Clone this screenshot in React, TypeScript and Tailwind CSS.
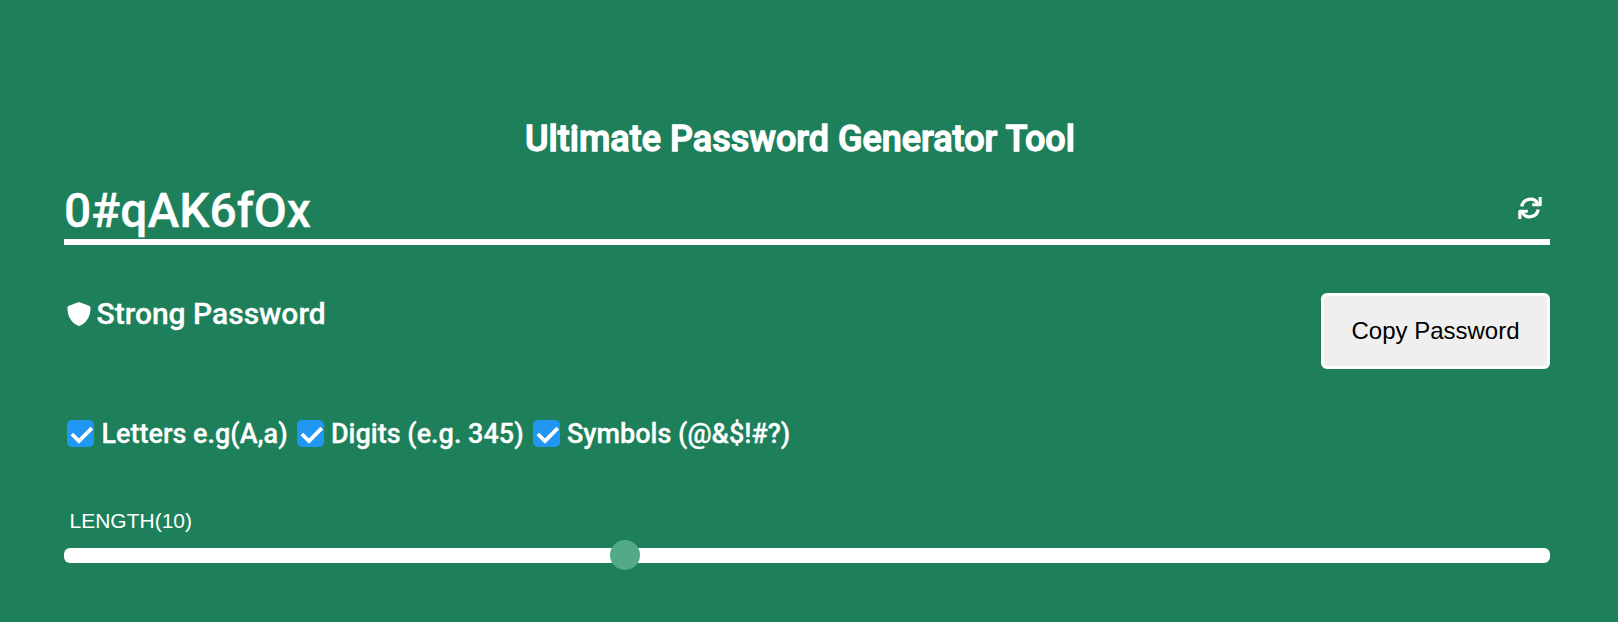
import React from "react";

const options = ["Letters e.g(A,a)", "Digits (e.g. 345)", "Symbols (@&$!#?)"];

export default function App() {
  return (
    <main className="h-[622px] overflow-hidden bg-[#1d805a] pr-[68px] pl-16 font-['Roboto',sans-serif] font-medium text-white">
      <h1 className="-ml-[14px] pt-[116px] text-center text-[36px] leading-[46px] font-medium [-webkit-text-stroke:1.3px_white]">Ultimate Password Generator Tool</h1>
      <div className="mt-[22px] flex h-[61px] items-center justify-between border-b-[6px] border-white text-[48px]">
        <span className="pb-[2px] leading-none [-webkit-text-stroke:0.3px_white]">0#qAK6fOx</span>
        <svg className="mr-2 mb-[7px] size-6" viewBox="0 0 24 24" fill="none" stroke="currentColor" strokeWidth="3.3">
          <path d="M3.8 10.4A8.6 8.6 0 0 1 20 8M20.2 13.6A8.6 8.6 0 0 1 4 16" />
          <path d="M22.2.9V8.8H14.2M1.8 23.1V15.2H9.8" strokeWidth="3.1" strokeLinejoin="round" />
        </svg>
      </div>
      <div className="mt-12 flex items-start justify-between">
        <div className="flex items-center pt-px text-[30px] leading-10 [-webkit-text-stroke:0.3px_white]">
          <svg className="mr-[6px] ml-[2.5px] size-6" viewBox="0 0 24 24" fill="currentColor"><path d="M12 0 22 3.8Q23.6 4.4 23.5 6C23.5 13 21 20 12.8 23.8Q12 24.2 11.2 23.8C3 20 .5 13 .5 6Q.4 4.4 2 3.8Z" /></svg>Strong Password
        </div>
        <button className="h-[76px] w-[229px] rounded-md border-[3px] border-white bg-[#efefef] font-['Liberation_Sans',sans-serif] text-2xl font-normal text-black">Copy Password</button>
      </div>
      <div className="mt-[44px] ml-[3px] flex h-10 items-center text-[27px] [-webkit-text-stroke:0.3px_white]">
        {options.map((text) => <label key={text} className="mr-[9px] flex items-center gap-[7.4px]"><span className="size-[27px] rounded-[5px] bg-[#2196f3]"><svg className="size-[27px]" viewBox="0 0 27 27" fill="none" stroke="white" strokeWidth="3.8"><path d="m4.8 14 7.2 7L24.8 8.2" /></svg></span><span className="pt-[2px]">{text}</span></label>)}
      </div>
      <div className="mt-[54px] ml-[5.5px] font-['Liberation_Sans',sans-serif] text-[21px] leading-7 font-normal">LENGTH(10)</div>
      <div className="relative mt-[13px] h-[15px] rounded-md bg-white"><span className="absolute -top-2 left-[546px] size-[30px] rounded-full bg-[#53aa88]" /></div>
    </main>
  );
}
